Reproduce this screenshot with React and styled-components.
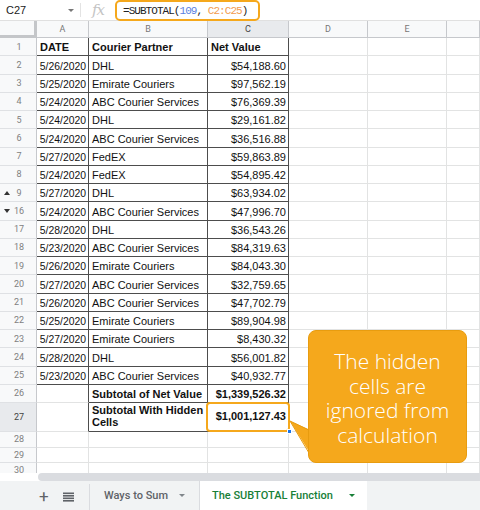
import React from 'react';
import styled, { createGlobalStyle, css } from 'styled-components';

const GlobalStyle = createGlobalStyle`
  html, body {
    margin: 0;
    padding: 0;
    background: #fff;
    overflow: hidden;
  }
  * {
    box-sizing: border-box;
  }
`;

const COLS = '37px 52px 119px 81px 79px 79px 1fr';
const DARK = '#4d4d4d';
const LIGHT = '#e2e3e3';
const HEAD_LINE = '#c6c8cc';
const ORANGE = '#f5a81c';

const Page = styled.div`
  position: relative;
  width: 480px;
  height: 510px;
  display: flex;
  flex-direction: column;
  overflow: hidden;
  font-family: "Liberation Sans", Arial, sans-serif;
  color: #111;
`;

const FormulaBar = styled.div`
  height: 21px;
  flex: none;
  display: flex;
  align-items: center;
  border-bottom: 1px solid #e0e0e0;
`;

const NameBox = styled.div`
  width: 81px;
  height: 14px;
  display: flex;
  align-items: center;
  justify-content: space-between;
  padding: 0 6px 0 6px;
  border-right: 1px solid #e3e3e3;
  font-size: 11px;
  color: #222;
`;

const Caret = styled.span`
  width: 0;
  height: 0;
  border-left: 3px solid transparent;
  border-right: 3px solid transparent;
  border-top: ${p => p.$size || 3}px solid ${p => p.$color || '#666'};
`;

const FxLabel = styled.div`
  width: 34px;
  text-align: center;
  font-family: "DejaVu Serif", "Liberation Serif", serif;
  font-style: italic;
  font-size: 15px;
  color: #c4c4c4;
  letter-spacing: -1px;
`;

const FormulaBox = styled.div`
  width: 145px;
  height: 21px;
  margin-top: 0;
  align-self: flex-start;
  display: flex;
  align-items: center;
  padding-left: 6px;
  border: 2.5px solid ${ORANGE};
  border-radius: 5px;
  font-family: "Liberation Mono", "DejaVu Sans Mono", monospace;
  font-size: 11px;
  letter-spacing: -0.95px;
  color: #222;
  white-space: pre;
`;

const Token = styled.span`
  color: ${p => p.$color};
`;

const Sheet = styled.div`
  height: 452px;
  flex: none;
  overflow: hidden;
`;

const GridRow = styled.div`
  display: grid;
  grid-template-columns: ${COLS};
  height: ${p => p.$height}px;
`;

const Corner = styled.div`
  background: #f8f9fa;
  border-right: 3px solid #c4c6c9;
  border-bottom: 3px solid #c4c6c9;
`;

const ColHeader = styled.div`
  display: flex;
  align-items: center;
  justify-content: center;
  background: ${p => (p.$active ? '#e8eaed' : '#f8f9fa')};
  border-right: 1px solid ${HEAD_LINE};
  border-bottom: 1px solid ${HEAD_LINE};
  font-family: Roboto, Arial, sans-serif;
  font-size: 9px;
  color: ${p => (p.$active ? '#444' : '#777')};
`;

const RowHeader = styled.div`
  position: relative;
  display: flex;
  align-items: center;
  justify-content: center;
  padding-left: 2px;
  background: ${p => (p.$active ? '#e8eaed' : '#f8f9fa')};
  border-right: 1px solid ${HEAD_LINE};
  border-bottom: 1px solid #dfe1e4;
  font-family: Roboto, Arial, sans-serif;
  font-size: 9px;
  color: ${p => (p.$active ? '#444' : '#808080')};
`;

const HiddenArrow = styled.span`
  position: absolute;
  left: 4px;
  top: 50%;
  margin-top: -2px;
  width: 0;
  height: 0;
  border-left: 3px solid transparent;
  border-right: 3px solid transparent;
  ${p => (p.$up
    ? css`border-bottom: 4px solid #333;`
    : css`border-top: 4px solid #333;`)}
`;

const Cell = styled.div`
  position: relative;
  display: flex;
  align-items: ${p => (p.$middle ? 'center' : 'flex-end')};
  justify-content: ${p => (p.$align === 'right' ? 'flex-end' : 'flex-start')};
  padding: 0 2px 1px 3px;
  border-right: 1px solid ${p => (p.$darkRight ? DARK : LIGHT)};
  border-bottom: 1px solid ${p => (p.$darkBottom ? DARK : LIGHT)};
  font-size: ${p => (p.$small ? '10.4px' : '11px')};
  font-weight: ${p => (p.$bold ? 700 : 400)};
  line-height: ${p => (p.$wrap ? '11.5px' : '13px')};
  white-space: ${p => (p.$wrap ? 'normal' : 'nowrap')};
  padding-bottom: ${p => (p.$wrap ? '3px' : '1px')};
  overflow: visible;
  color: #111;
  ${p => p.$highlight && css`
    &::after {
      content: '';
      position: absolute;
      left: -2px;
      top: -1px;
      right: -2px;
      bottom: -1px;
      border: 2.5px solid ${ORANGE};
      border-radius: 4px;
    }
  `}
`;

const Handle = styled.span`
  position: absolute;
  right: -4px;
  bottom: -3px;
  width: 5px;
  height: 5px;
  background: #1a73e8;
  border: 1px solid #fff;
  z-index: 2;
`;

const ScrollRow = styled.div`
  height: 8px;
  flex: none;
  padding-left: 38px;
  background: #fff;
`;

const ScrollThumb = styled.div`
  height: 100%;
  background: #dadce0;
  border-radius: 4px 0 0 4px;
`;

const TabBar = styled.div`
  flex: 1;
  display: flex;
  align-items: stretch;
  background: #f1f3f4;
  font-family: Roboto, Arial, sans-serif;
`;

const TabControls = styled.div`
  width: 90px;
  display: flex;
  align-items: center;
  padding-left: 39px;
  gap: 14px;
  border-right: 1px solid #dadce0;
  margin: 3px 0 0 0;
`;

const PlusIcon = styled.span`
  font-size: 17px;
  line-height: 1;
  color: #5f6368;
  font-weight: 400;
  margin-top: -2px;
`;

const Tab = styled.div`
  display: flex;
  align-items: center;
  gap: 9px;
  padding: 0 ${p => (p.$active ? 12 : 14)}px;
  width: ${p => p.$width}px;
  background: ${p => (p.$active ? '#fff' : 'transparent')};
  color: ${p => (p.$active ? '#188038' : '#5f6368')};
  font-size: 11px;
  font-weight: 500;
  white-space: nowrap;
  ${p => !p.$active && css`border-right: 1px solid #dadce0;`}
`;

const TabName = styled.span`
  flex: 1;
`;

const Callout = styled.div`
  position: absolute;
  left: 308px;
  top: 330px;
  width: 159px;
  height: 133px;
  display: flex;
  align-items: center;
  justify-content: center;
  padding-top: 3px;
  background: ${ORANGE};
  border: 1px solid #e89c0f;
  border-radius: 8px;
  color: #fff;
  font-family: "Open Sans", "Noto Sans", sans-serif;
  font-weight: 300;
  font-size: 21px;
  line-height: 24.5px;
  text-align: center;
`;

const Tail = styled.svg`
  position: absolute;
  left: 288px;
  top: 414px;
`;

const rows = [
  [1, 'DATE', 'Courier Partner', 'Net Value'],
  [2, '5/26/2020', 'DHL', '$54,188.60'],
  [3, '5/25/2020', 'Emirate Couriers', '$97,562.19'],
  [4, '5/24/2020', 'ABC Courier Services', '$76,369.39'],
  [5, '5/24/2020', 'DHL', '$29,161.82'],
  [6, '5/24/2020', 'ABC Courier Services', '$36,516.88'],
  [7, '5/27/2020', 'FedEX', '$59,863.89'],
  [8, '5/24/2020', 'FedEX', '$54,895.42'],
  [9, '5/27/2020', 'DHL', '$63,934.02'],
  [16, '5/24/2020', 'ABC Courier Services', '$47,996.70'],
  [17, '5/28/2020', 'DHL', '$36,543.26'],
  [18, '5/23/2020', 'ABC Courier Services', '$84,319.63'],
  [19, '5/26/2020', 'Emirate Couriers', '$84,043.30'],
  [20, '5/27/2020', 'ABC Courier Services', '$32,759.65'],
  [21, '5/26/2020', 'ABC Courier Services', '$47,702.79'],
  [22, '5/25/2020', 'Emirate Couriers', '$89,904.98'],
  [23, '5/27/2020', 'Emirate Couriers', '$8,430.32'],
  [24, '5/28/2020', 'DHL', '$56,001.82'],
  [25, '5/23/2020', 'ABC Courier Services', '$40,932.77'],
  [26, '', 'Subtotal of Net Value', '$1,339,526.32'],
  [27, '', 'Subtotal With Hidden Cells', '$1,001,127.43'],
  [28, '', '', ''],
  [29, '', '', ''],
  [30, '', '', ''],
];

const rowHeight = (n) => {
  if (n === 27) return 29;
  if (n >= 28) return 15.5;
  return 18.25;
};

const EmptyCells = () => (
  <>
    <Cell />
    <Cell />
    <Cell />
  </>
);

const DataRow = ({ row }) => {
  const [n, date, partner, value] = row;
  const inTable = n <= 25;
  const isTotal = n === 26 || n === 27;
  const bold = n === 1 || isTotal;
  return (
    <GridRow $height={rowHeight(n)}>
      <RowHeader $active={n === 27}>
        {n === 9 && <HiddenArrow $up />}
        {n === 16 && <HiddenArrow />}
        {n}
      </RowHeader>
      <Cell
        $align={n === 1 ? 'left' : 'right'}
        $small={n !== 1}
        $bold={n === 1}
        $darkRight={inTable || isTotal}
        $darkBottom={inTable}
      >
        {date}
      </Cell>
      <Cell
        $bold={bold}
        $wrap={n === 27}
        $darkRight={inTable || isTotal}
        $darkBottom={inTable || isTotal}
      >
        {partner}
      </Cell>
      <Cell
        $align={n === 1 ? 'left' : 'right'}
        $bold={bold}
        $middle={n === 27}
        $highlight={n === 27}
        $darkRight={inTable || isTotal}
        $darkBottom={inTable || isTotal}
      >
        {value}
        {n === 27 && <Handle />}
      </Cell>
      <EmptyCells />
    </GridRow>
  );
};

const ListIcon = () => (
  <svg width="11" height="10" viewBox="0 0 11 10">
    <rect x="0" y="0.5" width="11" height="1.6" fill="#5f6368" />
    <rect x="0" y="3" width="11" height="1.6" fill="#5f6368" />
    <rect x="0" y="5.5" width="11" height="1.6" fill="#5f6368" />
    <rect x="0" y="8" width="11" height="1.6" fill="#5f6368" />
  </svg>
);

export default function App() {
  return (
    <Page>
      <GlobalStyle />
      <FormulaBar>
        <NameBox>
          C27
          <Caret $color="#777" />
        </NameBox>
        <FxLabel>fx</FxLabel>
        <FormulaBox>
          =SUBTOTAL(<Token $color="#5b7fe0">109</Token>, <Token $color="#f29c4e">C2:C25</Token>)
        </FormulaBox>
      </FormulaBar>

      <Sheet>
        <GridRow $height={17}>
          <Corner />
          <ColHeader>A</ColHeader>
          <ColHeader>B</ColHeader>
          <ColHeader $active>C</ColHeader>
          <ColHeader>D</ColHeader>
          <ColHeader>E</ColHeader>
          <ColHeader />
        </GridRow>
        {rows.map(row => (
          <DataRow key={row[0]} row={row} />
        ))}
      </Sheet>

      <ScrollRow>
        <ScrollThumb />
      </ScrollRow>

      <TabBar>
        <TabControls>
          <PlusIcon>+</PlusIcon>
          <ListIcon />
        </TabControls>
        <Tab $width={110}>
          <TabName>Ways to Sum</TabName>
          <Caret $color="#80868b" />
        </Tab>
        <Tab $active $width={167}>
          <TabName>The SUBTOTAL Function</TabName>
          <Caret $color="#188038" />
        </Tab>
      </TabBar>

      <Tail width="24" height="44" viewBox="0 0 24 44">
        <path d="M22 16 L2 7 L22 39 Z" fill={ORANGE} />
        <path d="M21 16 L2 7 L21 39" fill="none" stroke="#e89c0f" strokeWidth="1" />
      </Tail>
      <Callout>
        The hidden<br />cells are<br />ignored from<br />calculation
      </Callout>
    </Page>
  );
}
